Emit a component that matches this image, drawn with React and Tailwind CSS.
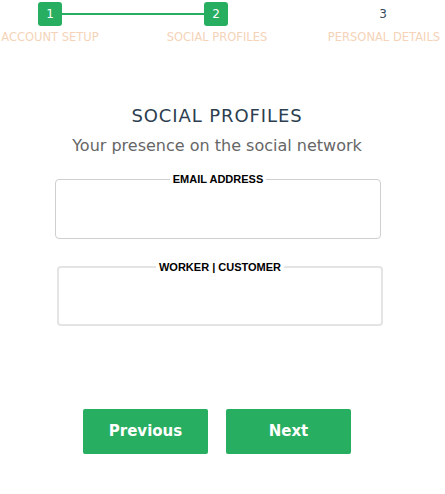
import React from 'react';

const sans = { fontFamily: '"DejaVu Sans", "Open Sans", sans-serif' };

function Stepper() {
  return (
    <div className="pt-[2px]">
      <div className="flex flex-row items-center pl-[38px]">
        <div className="flex h-[24px] w-[24px] items-center justify-center rounded-[3px] bg-[#27ae60] text-[12px] text-white">1</div>
        <div className="h-[2px] w-[142px] bg-[#27ae60]" />
        <div className="flex h-[24px] w-[24px] items-center justify-center rounded-[3px] bg-[#27ae60] text-[12px] text-white">2</div>
        <div className="w-[142px]" />
        <div className="flex h-[24px] w-[26px] items-center justify-center rounded-[3px] bg-white text-[12px] text-[#34495e]">3</div>
      </div>
      <div className="mt-[4px] flex flex-row gap-[67px] text-[11.5px] leading-[15px] uppercase text-[#f5d3b8]">
        <div className="flex w-[100px] flex-col items-center whitespace-nowrap">Account Setup</div>
        <div className="flex w-[100px] flex-col items-center whitespace-nowrap">Social Profiles</div>
        <div className="flex w-[100px] flex-col items-center whitespace-nowrap">Personal Details</div>
      </div>
    </div>
  );
}

function Field({ label, className }) {
  return (
    <fieldset className={className}>
      <legend
        className="mx-auto px-[3px] text-[11px] leading-[12px] font-bold text-black"
        style={{ fontFamily: '"Liberation Sans", Arial, sans-serif' }}
      >
        {label}
      </legend>
    </fieldset>
  );
}

export default function App() {
  return (
    <div className="h-[494px] w-[445px] bg-white" style={sans}>
      <Stepper />
      <div className="w-[434px] text-center">
        <h2 className="mt-[60px] text-[18px] leading-[22px] tracking-[0.9px] text-[#2c3e50]">SOCIAL PROFILES</h2>
        <p className="mt-[9px] text-[16px] leading-[20px] text-[#666]">Your presence on the social network</p>
      </div>
      <Field
        label="EMAIL ADDRESS"
        className="mt-[17px] ml-[55px] h-[66px] w-[326px] rounded-[4px] border border-[#cfcfcf]"
      />
      <Field
        label="WORKER | CUSTOMER"
        className="mt-[22px] ml-[57px] h-[65px] w-[326px] rounded-[4px] border-2 border-[#e4e4e4]"
      />
      <div className="mt-[83px] flex flex-row gap-[18px] pl-[83px]">
        <button className="h-[45px] w-[125px] rounded-[2px] bg-[#27ae60] text-[15px] font-bold text-white">Previous</button>
        <button className="h-[45px] w-[125px] rounded-[2px] bg-[#27ae60] text-[15px] font-bold text-white">Next</button>
      </div>
    </div>
  );
}
